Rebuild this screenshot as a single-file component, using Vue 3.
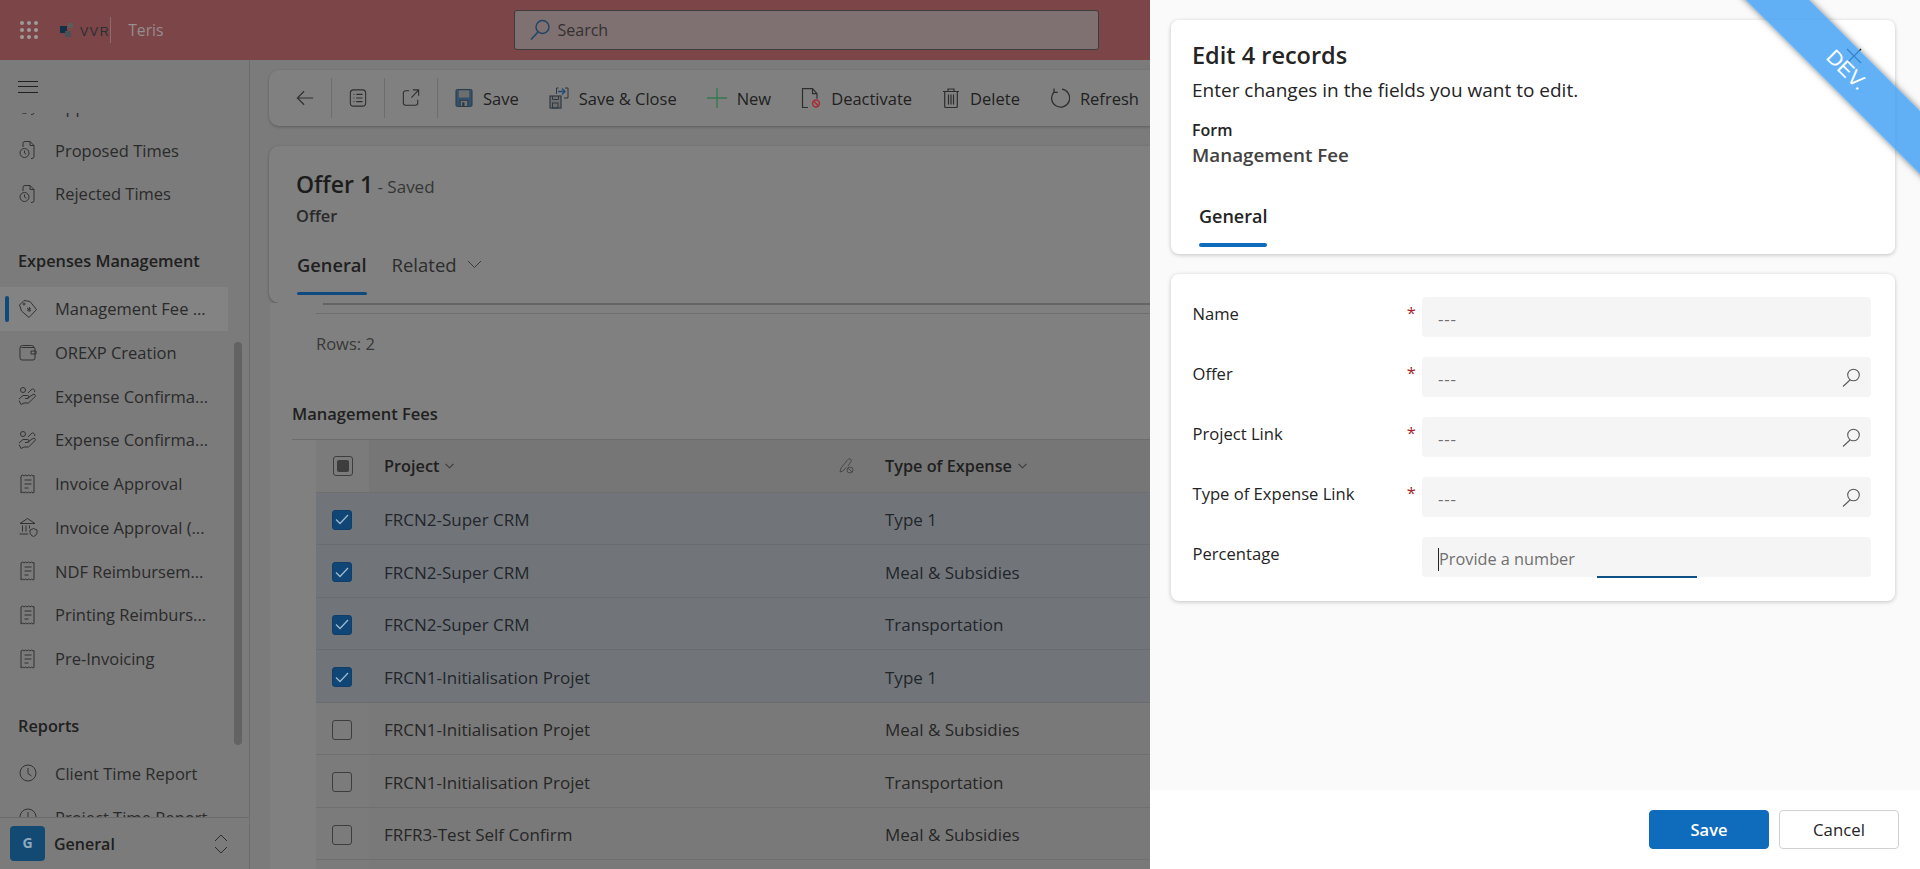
<template>
  <div class="page">
    <header class="topbar">
      <svg class="waffle" width="18" height="18" viewBox="0 0 18 18">
        <circle v-for="d in waffleDots" :key="d.key" :cx="d.x" :cy="d.y" r="2" fill="#a09a9a" />
      </svg>
      <div class="logo">
        <svg width="16" height="14" viewBox="0 0 16 14">
          <rect x="0" y="3" width="7" height="7" fill="#12304a" />
          <rect x="8" y="0" width="5" height="5" fill="#5c5c5c" />
          <rect x="5" y="8" width="6" height="6" fill="#4a5056" />
        </svg>
        <span class="logo-text">VVR</span>
      </div>
      <span class="app-name">Teris</span>
      <div class="search">
        <svg width="22" height="22" viewBox="0 0 22 22" fill="none" stroke="#1c4464" stroke-width="1.4">
          <circle cx="13.5" cy="8" r="6.5" />
          <path d="M9 13L2 20.5" />
        </svg>
        <span>Search</span>
      </div>
    </header>

    <div class="workspace">
      <aside class="sidebar">
        <div class="hamburger"><span></span><span></span><span></span></div>
        <nav class="nav">
          <div class="nav-inner">
            <template v-for="(item, index) in navItems" :key="index">
              <div v-if="item.heading" class="nav-heading">{{ item.label }}</div>
              <div v-else class="nav-item" :class="{ active: item.active }">
                <svg class="nav-icon" width="20" height="20" viewBox="0 0 20 20" fill="none" stroke="#333" stroke-width="1">
                  <path :d="navIcons[item.icon]" />
                </svg>
                <span>{{ item.label }}</span>
              </div>
            </template>
          </div>
          <div class="scrollbar"></div>
        </nav>
        <div class="area-switch">
          <div class="avatar">G</div>
          <span class="area-name">General</span>
          <svg width="16" height="24" viewBox="0 0 16 24" fill="none" stroke="#2c2c2c" stroke-width="1">
            <path d="M2 9l6-6 6 6M2 15l6 6 6-6" />
          </svg>
        </div>
      </aside>

      <main class="main">
        <div class="toolbar">
          <svg class="tool-icon" width="20" height="20" viewBox="0 0 20 20" fill="none" stroke="#2e2e2e" stroke-width="1.2">
            <path d="M19 10H1.500M9 2.500L1.500 10 9 17.500" />
          </svg>
          <i class="sep"></i>
          <svg class="tool-icon" width="20" height="20" viewBox="0 0 20 20" fill="none" stroke="#2e2e2e" stroke-width="1.2">
            <rect x="1.500" y="1" width="17" height="18" rx="3.500" />
            <path d="M8 6h7M8 10h7M8 14h7M5 6h1M5 10h1M5 14h1" />
          </svg>
          <i class="sep"></i>
          <svg class="tool-icon" width="20" height="20" viewBox="0 0 20 20" fill="none" stroke="#2e2e2e" stroke-width="1.2">
            <path d="M8 2H4a2.500 2.500 0 0 0-2.500 2.500v11A2.500 2.500 0 0 0 4 18h11a2.500 2.500 0 0 0 2.500-2.500V12M12 1h6.500v6.500M18.500 1L10.500 9.500" />
          </svg>
          <i class="sep"></i>
          <div class="tool">
            <svg width="18" height="20" viewBox="0 0 19 20">
              <rect x="1" y="1" width="17" height="18" rx="1.500" fill="#35506a" stroke="#2c3b49" />
              <rect x="4" y="2" width="11" height="7.500" fill="#6e6e6e" />
              <rect x="5.500" y="12.500" width="8" height="6.500" fill="#767676" stroke="#2c3b49" />
              <rect x="7.500" y="14.500" width="2.500" height="4" fill="#2c3b49" />
            </svg>
            <span>Save</span>
          </div>
          <div class="tool">
            <svg width="20" height="22" viewBox="0 0 20 22" fill="none">
              <rect x="1" y="9" width="11" height="12" fill="#6e6e6e" stroke="#2f3a44" stroke-width="1.200" />
              <rect x="3.500" y="16" width="5.500" height="5" stroke="#2f3a44" />
              <path d="M3.500 9v3.500h6V9" stroke="#2f3a44" />
              <path d="M9 4.500h7M13 1.500l3 3-3 3" stroke="#1e4a72" stroke-width="1.300" />
              <path d="M7.500 7V1h2M16 1h3v10h-4" stroke="#333" />
            </svg>
            <span>Save &amp; Close</span>
          </div>
          <div class="tool">
            <svg width="20" height="20" viewBox="0 0 20 20" fill="none" stroke="#35784f" stroke-width="1.300">
              <path d="M10 0v20M0 10h20" />
            </svg>
            <span>New</span>
          </div>
          <div class="tool">
            <svg width="20" height="20" viewBox="0 0 20 20" fill="none">
              <path d="M7 19.500H1.500V.7h10l4.500 5v5M11.500.7v5h4.500" stroke="#2e2e2e" stroke-width="1.200" />
              <circle cx="15" cy="15.500" r="3.400" stroke="#a82c34" stroke-width="1.500" />
              <path d="M12.800 13.300l4.500 4.500" stroke="#a82c34" stroke-width="1.500" />
            </svg>
            <span>Deactivate</span>
          </div>
          <div class="tool">
            <svg width="18" height="20" viewBox="0 0 18 20" fill="none" stroke="#2e2e2e" stroke-width="1.200">
              <path d="M1 3.500h16M6 3.500V1h6v2.500M2.700 3.500v15a1 1 0 0 0 1 1h10.600a1 1 0 0 0 1-1v-15M6.500 6.500v10M9 6.500v10M11.500 6.500v10" />
            </svg>
            <span>Delete</span>
          </div>
          <div class="tool">
            <svg width="20" height="20" viewBox="0 0 20 20" fill="none" stroke="#2e2e2e" stroke-width="1.300">
              <path d="M12 1.200a9 9 0 1 1-8 2.800M4 .5v3.800h3.800" />
            </svg>
            <span>Refresh</span>
          </div>
        </div>

        <section class="record-head">
          <div class="record-title"><strong>Offer 1</strong><span> - Saved</span></div>
          <div class="record-type">Offer</div>
          <div class="record-tabs">
            <span class="record-tab on">General</span>
            <span class="record-tab">Related
              <svg width="15" height="9" viewBox="0 0 15 9" fill="none" stroke="#3a3a3a"><path d="M1 1l6.500 6.500L14 1" /></svg>
            </span>
          </div>
        </section>

        <section class="record-body">
          <div class="subgrid-foot">Rows: 2</div>
          <h4 class="grid-title">Management Fees</h4>
          <div class="grid">
            <div class="grid-row grid-head">
              <div class="cell-check"><span class="check mixed"></span></div>
              <div class="cell project">
                Project
                <svg class="sort" width="9" height="6" viewBox="0 0 9 6" fill="none" stroke="#3a3a3a" stroke-width="1.100"><path d="M.5.8l4 4 4-4" /></svg>
                <svg class="pencil" width="16" height="16" viewBox="0 0 16 16" fill="none" stroke="#444" stroke-width=".9">
                  <path d="M1 14l1-4 7-8.500a1.800 1.800 0 0 1 3 2L9 8M1 14l3-1 3-3.500" />
                  <circle cx="11" cy="12" r="3" />
                  <path d="M9 10l4 4" />
                </svg>
              </div>
              <div class="cell">
                Type of Expense
                <svg class="sort" width="9" height="6" viewBox="0 0 9 6" fill="none" stroke="#3a3a3a" stroke-width="1.100"><path d="M.5.8l4 4 4-4" /></svg>
              </div>
            </div>
            <div v-for="(row, index) in rows" :key="index" class="grid-row data-row" :class="{ selected: row.selected }">
              <div class="cell-check">
                <span class="check" :class="{ checked: row.selected }">
                  <svg v-if="row.selected" width="14" height="11" viewBox="0 0 14 11" fill="none" stroke="#9fb8cc" stroke-width="1.300"><path d="M1 5.500L5 9.500 13 1" /></svg>
                </span>
              </div>
              <div class="cell project">{{ row.project }}</div>
              <div class="cell">{{ row.type }}</div>
            </div>
          </div>
        </section>
      </main>
    </div>

    <aside class="panel">
      <div class="panel-body">
        <section class="card panel-head">
          <h2>Edit 4 records</h2>
          <p class="hint">Enter changes in the fields you want to edit.</p>
          <div class="form-label">Form</div>
          <div class="form-name">Management Fee</div>
          <div class="panel-tabs"><span class="panel-tab">General</span></div>
          <svg class="close" width="16" height="16" viewBox="0 0 16 16" fill="none" stroke="#1a1a1a" stroke-width="1.200"><path d="M1 1l14 14M15 1L1 15" /></svg>
        </section>

        <section class="card fields">
          <div v-for="field in fields" :key="field.label" class="field-row">
            <div class="field-label">
              <span>{{ field.label }}</span>
              <span v-if="field.required" class="required">*</span>
            </div>
            <div class="field-box" :class="{ focused: field.placeholder }">
              <span v-if="field.placeholder" class="placeholder">{{ field.placeholder }}</span>
              <span v-else class="empty">---</span>
              <svg v-if="field.lookup" class="lookup" width="19" height="19" viewBox="0 0 19 19" fill="none" stroke="#5a5a5a" stroke-width="1.100">
                <circle cx="11.500" cy="7" r="5.800" />
                <path d="M8 12L1 18.500" />
              </svg>
            </div>
          </div>
        </section>
      </div>

      <footer class="panel-foot">
        <button class="btn primary">Save</button>
        <button class="btn">Cancel</button>
      </footer>
    </aside>

    <div class="ribbon">DEV.</div>
  </div>
</template>

<script setup>
const waffleDots = [];
for (const y of [2, 9, 16]) {
  for (const x of [2, 9, 16]) {
    waffleDots.push({ key: `${x}-${y}`, x, y });
  }
}

// Stroke outlines for the sidebar icons, drawn on a 20x20 box
const navIcons = {
  clockDoc: 'M5 7V3.500a2 2 0 0 1 2-2h5l4 4v11a2 2 0 0 1-2 2h-1M12 1.500v4h4M2 13a4.500 4.500 0 1 0 9 0a4.500 4.500 0 1 0-9 0M6.500 10.500V13l1.800 1.200',
  tag: 'M1.500 6L6 1.500l6 1 6.500 8-7.500 8-7.500-6.500zM5 5a1 1 0 1 0 2 0a1 1 0 1 0-2 0M9 9l4 3M11.500 8l-.500 5M9 11.500l4-2',
  wallet: 'M2 6a2.500 2.500 0 0 1 2.500-2.500h9A2.500 2.500 0 0 1 16 6M2 6v10a2 2 0 0 0 2 2h11a2 2 0 0 0 2-2v-9a1.500 1.500 0 0 0-1.500-1.500H3.500M13 12h5v-3h-5z',
  hand: 'M2.500 4a2.500 2.500 0 1 0 5 0a2.500 2.500 0 1 0-5 0M1 13l4-3.500h4.500a1.300 1.300 0 0 1 0 3H7M9 12.500l6-4a1.500 1.500 0 0 1 2 2.200L10.500 17H6l-3 1.500-2-4M10 7l3-3a2 2 0 0 1 3.500 2',
  receipt: 'M3 2l1.500-1 1.500 1 1.500-1 1.500 1 1.500-1 1.500 1 1.500-1 1.500 1 1-.5v17l-1 .5-1.500-1-1.500 1-1.500-1-1.500 1-1.500-1-1.500 1-1.500-1-1.500 1L3 18zM6.500 6h7M6.500 10h7M6.500 14h4',
  bank: 'M2 6.500L9.500 1.500 17 6.500zM4.500 8.500v6M8 8.500v6M11.500 8.500v3M1.500 17h8.500M12 13l3.500-1.500L19 13v2.500c0 2-1.500 3-3.500 4-2-1-3.500-2-3.500-4z',
  clock: 'M2 10a8 8 0 1 0 16 0a8 8 0 1 0-16 0M10 5v5.500l3.500 2.500'
};

const navItems = [
  { label: 'Approved Times', icon: 'clockDoc' },
  { label: 'Proposed Times', icon: 'clockDoc' },
  { label: 'Rejected Times', icon: 'clockDoc' },
  { label: 'Expenses Management', heading: true },
  { label: 'Management Fee ...', icon: 'tag', active: true },
  { label: 'OREXP Creation', icon: 'wallet' },
  { label: 'Expense Confirma...', icon: 'hand' },
  { label: 'Expense Confirma...', icon: 'hand' },
  { label: 'Invoice Approval', icon: 'receipt' },
  { label: 'Invoice Approval (...', icon: 'bank' },
  { label: 'NDF Reimbursem...', icon: 'receipt' },
  { label: 'Printing Reimburs...', icon: 'receipt' },
  { label: 'Pre-Invoicing', icon: 'receipt' },
  { label: 'Reports', heading: true },
  { label: 'Client Time Report', icon: 'clock' },
  { label: 'Project Time Report', icon: 'clock' }
];

const rows = [
  { project: 'FRCN2-Super CRM', type: 'Type 1', selected: true },
  { project: 'FRCN2-Super CRM', type: 'Meal & Subsidies', selected: true },
  { project: 'FRCN2-Super CRM', type: 'Transportation', selected: true },
  { project: 'FRCN1-Initialisation Projet', type: 'Type 1', selected: true },
  { project: 'FRCN1-Initialisation Projet', type: 'Meal & Subsidies' },
  { project: 'FRCN1-Initialisation Projet', type: 'Transportation' },
  { project: 'FRFR3-Test Self Confirm', type: 'Meal & Subsidies' },
  { project: 'FRFR3-Test Self Confirm', type: 'Transportation' }
];

const fields = [
  { label: 'Name', required: true },
  { label: 'Offer', required: true, lookup: true },
  { label: 'Project Link', required: true, lookup: true },
  { label: 'Type of Expense Link', required: true, lookup: true },
  { label: 'Percentage', placeholder: 'Provide a number' }
];
</script>

<style>
body {
  overflow: hidden;
}
</style>

<style scoped>
.page {
  position: relative;
  display: flex;
  flex-direction: column;
  width: 100vw;
  height: 100vh;
  overflow: hidden;
  font-family: "Open Sans", "Noto Sans", sans-serif;
  font-size: 16.5px;
  color: #262626;
  background: #7b7b7b;
}

/* The left part is dimmed by the open side panel, its colours are the dimmed ones */
.topbar {
  display: flex;
  align-items: center;
  flex: 0 0 60px;
  height: 60px;
  padding-left: 20px;
  background: #7c4548;
}

.logo {
  display: flex;
  align-items: center;
  gap: 4px;
  height: 26px;
  margin-left: 22px;
  border-right: 1px solid #8d6c6e;
}

.logo-text {
  font-family: "Liberation Sans", sans-serif;
  font-size: 12.500px;
  letter-spacing: 1.500px;
  color: #2b2d33;
  margin-top: 4px;
}

.app-name {
  margin-left: 17px;
  font-size: 15.700px;
  color: #978e8e;
}

.search {
  display: flex;
  align-items: center;
  gap: 7px;
  width: 585px;
  height: 40px;
  margin-left: 350px;
  padding-left: 14px;
  box-sizing: border-box;
  border: 1px solid #3c3c3c;
  border-radius: 3px;
  background: #7f7072;
  color: #333030;
  font-size: 16px;
}

.workspace {
  display: flex;
  flex: 1;
  min-height: 0;
}

.sidebar {
  display: flex;
  flex-direction: column;
  flex: 0 0 250px;
  box-sizing: border-box;
  border-right: 1px solid #6d6d6d;
  background: #7b7b7b;
}

.hamburger {
  display: flex;
  flex-direction: column;
  gap: 4.500px;
  flex: 0 0 53px;
  box-sizing: border-box;
  padding: 20.500px 0 0 18px;
}

.hamburger span {
  display: block;
  width: 20px;
  height: 1px;
  background: #202020;
}

.nav {
  position: relative;
  flex: 1;
  min-height: 0;
  overflow: hidden;
}

.nav-inner {
  margin-top: -28.500px;
}

.nav-item {
  display: flex;
  align-items: center;
  gap: 17px;
  position: relative;
  width: 228px;
  height: 43.750px;
  box-sizing: border-box;
  padding-left: 18px;
  white-space: nowrap;
  color: #2a2a2a;
}

.nav-item.active {
  background: #838383;
}

.nav-item.active::before {
  content: "";
  position: absolute;
  left: 5px;
  top: 9px;
  width: 4px;
  height: 26px;
  border-radius: 2px;
  background: #0f4a7c;
}

.nav-heading {
  height: 22px;
  line-height: 22px;
  margin: 34px 0 15px 18px;
  font-weight: 600;
  font-size: 16.300px;
  color: #202020;
}

.scrollbar {
  position: absolute;
  left: 234px;
  top: 229px;
  width: 8px;
  height: 403px;
  border-radius: 4px;
  background: #636363;
}

.area-switch {
  display: flex;
  align-items: center;
  flex: 0 0 52px;
  box-sizing: border-box;
  padding: 0 20px 0 10px;
  border-top: 1px solid #6a6a6a;
}

.avatar {
  width: 35px;
  height: 35px;
  line-height: 33px;
  border-radius: 4px;
  text-align: center;
  font-size: 14px;
  font-weight: 700;
  color: #8fa9bd;
  background: #134a74;
}

.area-name {
  flex: 1;
  margin-left: 9px;
  font-size: 16px;
  font-weight: 600;
  color: #202020;
}

.main {
  flex: 1;
  min-width: 0;
  padding: 10px 0 0 19px;
}

.toolbar {
  display: flex;
  align-items: center;
  height: 56px;
  padding-left: 27px;
  border-radius: 10px 0 0 10px;
  background: #808080;
  box-shadow: 0 1px 3px rgba(0, 0, 0, 0.25);
}

.tool-icon {
  width: 18px;
}

.sep {
  width: 1px;
  height: 40px;
  margin: 0 17px;
  background: #6d6d6d;
}

.tool {
  display: flex;
  align-items: center;
  gap: 10px;
  margin-right: 30px;
  white-space: nowrap;
  color: #202020;
}

.record-head {
  position: relative;
  height: 157px;
  margin-top: 20px;
  box-sizing: border-box;
  padding: 20px 0 0 27px;
  border-radius: 10px 0 0 10px;
  background: #808080;
  box-shadow: 0 1px 3px rgba(0, 0, 0, 0.3);
}

.record-title {
  height: 36px;
  line-height: 36px;
}

.record-title strong {
  font-size: 23px;
  font-weight: 600;
  color: #1c1c1c;
}

.record-title span {
  font-size: 17px;
  color: #353535;
}

.record-type {
  margin-top: 2px;
  line-height: 24px;
  font-size: 16.400px;
  font-weight: 600;
  color: #2a2a2a;
}

.record-tabs {
  display: flex;
  gap: 25px;
  margin: 21px 0 0 1px;
}

.record-tab {
  position: relative;
  display: flex;
  align-items: center;
  gap: 10px;
  height: 30px;
  font-size: 18.500px;
  color: #2c2c2c;
}

.record-tab.on {
  font-size: 18.300px;
  font-weight: 600;
  color: #202020;
}

.record-tab.on::after {
  content: "";
  position: absolute;
  left: 0;
  right: 0;
  bottom: -16px;
  height: 3px;
  border-radius: 2px;
  background: #0e4a80;
}

.record-body {
  position: relative;
  margin-left: 1px;
  height: 600px;
  padding: 10px 0 0 22px;
  background: #808080;
}

.record-body::before {
  content: "";
  position: absolute;
  left: 53px;
  right: 0;
  top: 0;
  height: 2px;
  background: #646464;
}

.subgrid-foot {
  height: 60px;
  margin-left: 24px;
  line-height: 60px;
  border-top: 1px solid #6f6f6f;
  color: #383838;
}

.grid-title {
  margin: 0;
  padding-top: 24px;
  height: 31px;
  line-height: 31px;
  font-size: 16.500px;
  font-weight: 600;
  color: #202020;
}

.grid {
  margin-top: 10px;
  border-top: 1px solid #6c6c6c;
}

.grid-row {
  display: grid;
  grid-template-columns: 24px 53px 501px 1fr;
  height: 52.500px;
  box-sizing: border-box;
  border-bottom: 1px solid #6f6f6f;
  font-size: 17px;
  color: #262626;
}

.grid-row::before {
  content: "";
  background: #808080;
  margin-bottom: -1px;
}

.cell-check {
  display: flex;
  align-items: center;
  padding-left: 16px;
  background: #7b7b7b;
}

.cell {
  display: flex;
  align-items: center;
  gap: 6px;
  padding-left: 15px;
  background: #797979;
  white-space: nowrap;
}

.data-row .cell,
.data-row .cell-check {
  padding-top: 3px;
}

.project {
  position: relative;
}

.grid-head {
  font-size: 16.300px;
  font-weight: 600;
  color: #202020;
}

.grid-head .cell {
  background: #767676;
}

.grid-row.selected .cell,
.grid-row.selected .cell-check {
  background: #71757a;
  color: #22252a;
}

.grid-row.selected {
  border-bottom-color: #696d72;
}

.pencil {
  position: absolute;
  right: 15px;
  top: 18px;
}

.check {
  display: flex;
  align-items: center;
  justify-content: center;
  width: 20px;
  height: 20px;
  box-sizing: border-box;
  border: 1px solid #3d3d3d;
  border-radius: 3px;
}

.check.checked {
  background: #0f4676;
  border-color: #0f3f69;
}

.check.mixed {
  margin-left: 1px;
}

.check.mixed::after {
  content: "";
  width: 12px;
  height: 12px;
  border-radius: 2px;
  background: #3d3d3d;
}

.panel {
  position: absolute;
  top: 0;
  right: 0;
  bottom: 0;
  display: flex;
  flex-direction: column;
  width: 770px;
  background: #fafafa;
  color: #242424;
}

.panel-body {
  flex: 1;
  display: flex;
  flex-direction: column;
  gap: 20px;
  padding: 20px 25px 0 21px;
}

.card {
  position: relative;
  border-radius: 8px;
  background: #fff;
  box-shadow: 0 1px 4px rgba(0, 0, 0, 0.22);
}

.panel-head {
  height: 234px;
  box-sizing: border-box;
  padding: 20px 21px 0;
}

.panel-head h2 {
  margin: 0;
  line-height: 30px;
  font-size: 23.500px;
  font-weight: 600;
  color: #242424;
}

.hint {
  margin: 7px 0 0;
  line-height: 26px;
  font-size: 19px;
}

.form-label {
  margin-top: 15px;
  line-height: 24px;
  font-size: 16px;
  font-weight: 600;
}

.form-name {
  line-height: 26px;
  font-size: 18.800px;
  font-weight: 600;
  color: #424242;
}

.panel-tabs {
  margin-top: 34px;
  padding-left: 7px;
}

.panel-tab {
  position: relative;
  display: inline-block;
  line-height: 28px;
  font-size: 18px;
  font-weight: 600;
}

.panel-tab::after {
  content: "";
  position: absolute;
  left: 0;
  right: 0;
  bottom: -17px;
  height: 4px;
  border-radius: 2px;
  background: #0f6cbd;
}

.close {
  position: absolute;
  right: 33px;
  top: 28px;
}

.fields {
  display: flex;
  flex-direction: column;
  gap: 20px;
  padding: 23px 24px 24px 21.500px;
}

.field-row {
  display: grid;
  grid-template-columns: 229.500px 1fr;
}

.field-label {
  display: flex;
  justify-content: space-between;
  padding: 4.500px 6px 0 0;
  line-height: 24px;
  font-size: 16.600px;
}

.required {
  color: #a4262c;
  line-height: 22px;
}

.field-box {
  position: relative;
  display: flex;
  align-items: center;
  height: 40px;
  box-sizing: border-box;
  padding: 3px 10px 0 16px;
  border-radius: 4px;
  background: #f5f5f5;
  color: #707070;
}

.empty {
  flex: 1;
  font-size: 17px;
  letter-spacing: 0.800px;
}

.placeholder {
  flex: 1;
  margin-top: 2px;
  line-height: 23px;
  font-size: 16.300px;
  border-left: 1px solid #242424;
  color: #707070;
}

.field-box.focused::after {
  content: "";
  position: absolute;
  left: 175px;
  bottom: -1px;
  width: 100px;
  height: 2px;
  background: #0e4f85;
}

.lookup {
  margin-top: -3px;
}

.panel-foot {
  display: flex;
  justify-content: flex-end;
  gap: 10px;
  flex: 0 0 79px;
  box-sizing: border-box;
  padding: 20px 21px 0 0;
  background: #fff;
}

.btn {
  width: 120px;
  height: 39px;
  border: 1px solid #d1d1d1;
  border-radius: 4px;
  background: #fff;
  color: #242424;
  font-family: inherit;
  font-size: 16.800px;
}

.btn.primary {
  border-color: #0f6cbd;
  background: #0f6cbd;
  color: #fff;
  font-size: 16.500px;
  font-weight: 600;
}

.ribbon {
  position: absolute;
  left: 1697px;
  top: 47px;
  width: 300px;
  height: 45px;
  line-height: 45px;
  text-align: center;
  font-family: "Liberation Sans", sans-serif;
  font-size: 21px;
  color: #fff;
  background: rgba(59, 158, 244, 0.8);
  box-shadow: 0 0 6px rgba(0, 0, 0, 0.5);
  transform: rotate(45deg);
}
</style>
